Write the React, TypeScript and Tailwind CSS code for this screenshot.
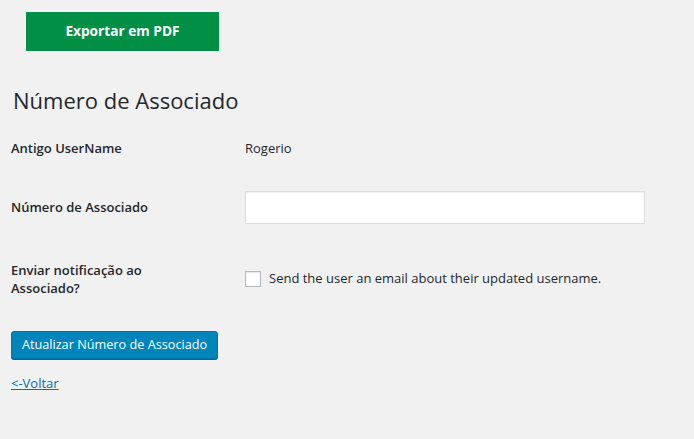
export default function App() {
  return (
    <div className="min-h-[439px] w-[694px] bg-[#f1f1f1] text-[#23282d] font-['Open_Sans',sans-serif]">
      <div className="pl-[26px] pt-[12px]">
        <button className="h-[39px] w-[193px] bg-[#008f45] text-[13.7px] font-bold text-white">
          Exportar em PDF
        </button>
      </div>

      <h2 className="mt-[35px] pl-[13px] text-[22px] leading-[29px] font-normal">Número de Associado</h2>

      <div className="mt-[19px] pl-[11px]">
        <div className="flex h-[30px] items-center">
          <div className="w-[234px] text-[13px] font-semibold">Antigo UserName</div>
          <div className="text-[13px]">Rogerio</div>
        </div>

        <div className="mt-[27px] flex h-[33px] items-center">
          <div className="w-[234px] text-[13px] font-semibold">Número de Associado</div>
          <input
            type="text"
            className="h-[33px] w-[400px] border border-[#ddd] bg-white px-2 text-[13px] shadow-[inset_0_1px_2px_rgba(0,0,0,0.07)] outline-none"
          />
        </div>

        <div className="mt-[37px] flex items-center">
          <div className="w-[234px] text-[13px] leading-[18px] font-semibold">
            Enviar notificação ao
            <br />
            Associado?
          </div>
          <label className="flex items-center gap-[8px] text-[13px]">
            <span className="h-[16px] w-[16px] border border-[#b4b9be] bg-white shadow-[inset_0_1px_2px_rgba(0,0,0,0.1)]" />
            Send the user an email about their updated username.
          </label>
        </div>

        <button className="mt-[34px] h-[28px] w-[207px] rounded-[3px] border border-[#0073aa] bg-[#0085ba] text-[12.7px] text-white shadow-[0_1px_0_#006799]">
          Atualizar Número de Associado
        </button>

        <div className="mt-[11px]">
          <a href="#" className="text-[13px] text-[#0073aa] underline">
            &lt;-Voltar
          </a>
        </div>
      </div>
    </div>
  );
}
